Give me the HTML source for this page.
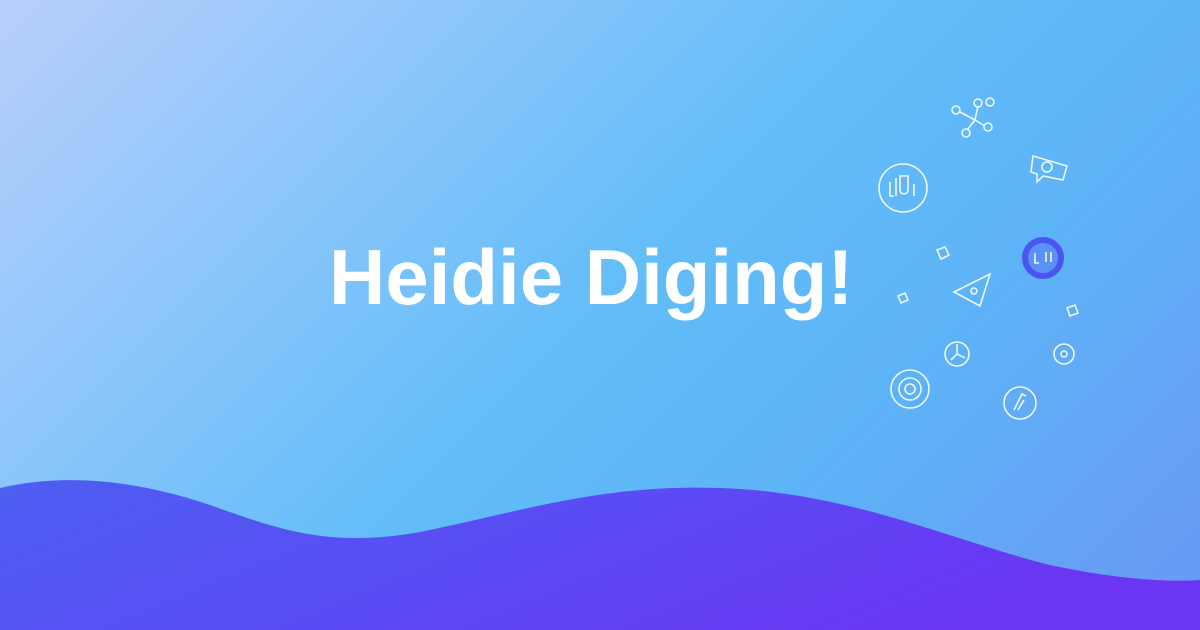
<!DOCTYPE html>
<html><head><meta charset="utf-8"><style>
html,body{margin:0;padding:0}
body{width:1200px;height:630px;overflow:hidden;position:relative;
background:linear-gradient(135deg,#b9cffb 0%,#8ec6fb 25%,#62bdf8 50%,#5db3f7 70%,#6a97f3 100%);font-family:"Liberation Sans",sans-serif}
.t{position:absolute;left:329px;top:232px;font-size:78px;font-weight:bold;color:#fff;white-space:nowrap;letter-spacing:0px}
svg{position:absolute;left:0;top:0}
</style></head><body>
<svg width="1200" height="630">
<defs><linearGradient id="w" x1="0" x2="1" y1="0" y2="0.3">
<stop offset="0" stop-color="#4d5ef2"/><stop offset="0.5" stop-color="#5a4cf4"/><stop offset="1" stop-color="#6a36f3"/></linearGradient></defs>
<path d="M0 488 C60 474 130 478 210 505 C280 530 330 548 420 532 C520 512 600 484 720 488 C850 492 950 540 1050 565 C1120 580 1170 582 1200 580 L1200 630 L0 630 Z" fill="url(#w)"/>
<g fill="none" stroke="#fff" stroke-width="1.6" opacity="0.9">
<circle cx="903" cy="188" r="24"/><path d="M896 178 v18 M900 176 h8 v14 a4 4 0 0 1 -8 0 z M890 182 v14 h4 M914 184 v12"/>
<circle cx="956" cy="110" r="4"/><circle cx="978" cy="103" r="4"/><circle cx="990" cy="102" r="4"/><circle cx="966" cy="133" r="4"/><circle cx="988" cy="127" r="4"/><path d="M960 112 l15 8 l3 -14 M975 120 l-8 10 M975 120 l10 6"/>
<path d="M1033 156 l34 10 l-4 14 l-20 -4 l-6 6 l0 -8 l-6 -2 z"/><circle cx="1047" cy="167" r="5"/>
<circle cx="1043" cy="258" r="18" stroke="#4a4bef" stroke-width="6" fill="#5b8ef6"/><path d="M1035 253 v10 h4 M1046 252 v10 M1051 252 v10"/>
<path d="M954 292 l36 -18 l-10 32 z"/><circle cx="974" cy="291" r="3"/>
<path d="M937 250 l8 -3 l4 8 l-8 4 z"/><path d="M898 296 l7 -3 l3 7 l-7 3 z"/><path d="M1067 308 l8 -3 l3 8 l-8 3 z"/>
<circle cx="957" cy="354" r="12"/><path d="M957 344 v10 l-6 6 M957 354 l8 4"/>
<circle cx="1064" cy="354" r="10"/><circle cx="1064" cy="354" r="3"/>
<circle cx="910" cy="389" r="19"/><circle cx="910" cy="389" r="11"/><circle cx="910" cy="389" r="5"/>
<circle cx="1020" cy="403" r="16"/><path d="M1014 410 l8 -16 l4 2 M1018 410 l6 -10"/>
</g>
</svg>
<div class="t">Heidie Diging!</div>
</body></html>
